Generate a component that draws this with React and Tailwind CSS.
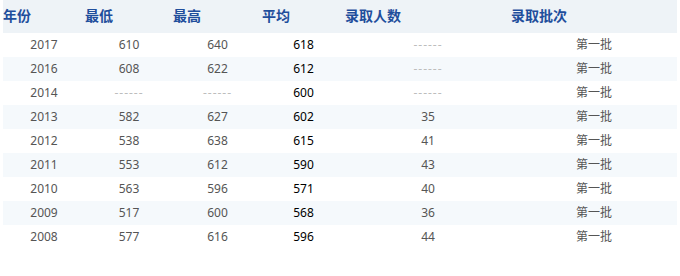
const rows = [
  ["2017", "610", "640", "618", null, "第一批"],
  ["2016", "608", "622", "612", null, "第一批"],
  ["2014", null, null, "600", null, "第一批"],
  ["2013", "582", "627", "602", "35", "第一批"],
  ["2012", "538", "638", "615", "41", "第一批"],
  ["2011", "553", "612", "590", "43", "第一批"],
  ["2010", "563", "596", "571", "40", "第一批"],
  ["2009", "517", "600", "568", "36", "第一批"],
  ["2008", "577", "616", "596", "44", "第一批"],
]

const headers = ["年份", "最低", "最高", "平均", "录取人数", "录取批次"]

function Cell({ value, dark }) {
  if (value === null) {
    return <td className="text-center text-[12px] text-[#bdbdbd] tracking-[1px]">------</td>
  }
  return (
    <td className={`text-center text-[12px] ${dark ? "text-black" : "text-[#555]"}`}>
      {value}
    </td>
  )
}

export default function App() {
  return (
    <div
      className="w-[680px] h-[276px] bg-white px-[3px]"
      style={{ fontFamily: '"Noto Sans", "Noto Sans CJK SC", sans-serif' }}
    >
      <table className="w-[674px] table-fixed border-collapse">
        <colgroup>
          <col className="w-[82px]" />
          <col className="w-[88px]" />
          <col className="w-[89px]" />
          <col className="w-[83px]" />
          <col className="w-[166px]" />
          <col className="w-[166px]" />
        </colgroup>
        <thead>
          <tr className="h-[33px] bg-[#eef3f7]">
            {headers.map((h) => (
              <th
                key={h}
                className="p-0 pb-[3px] text-left text-[14px] font-bold text-[#1f4e9c] align-middle"
              >
                {h}
              </th>
            ))}
          </tr>
        </thead>
        <tbody>
          {rows.map((r, i) => (
            <tr key={r[0]} className={`h-[24px] ${i % 2 === 1 ? "bg-[#f5f9fc]" : "bg-white"}`}>
              {r.map((v, j) => (
                <Cell key={j} value={v} dark={j === 3} />
              ))}
            </tr>
          ))}
        </tbody>
      </table>
    </div>
  )
}
